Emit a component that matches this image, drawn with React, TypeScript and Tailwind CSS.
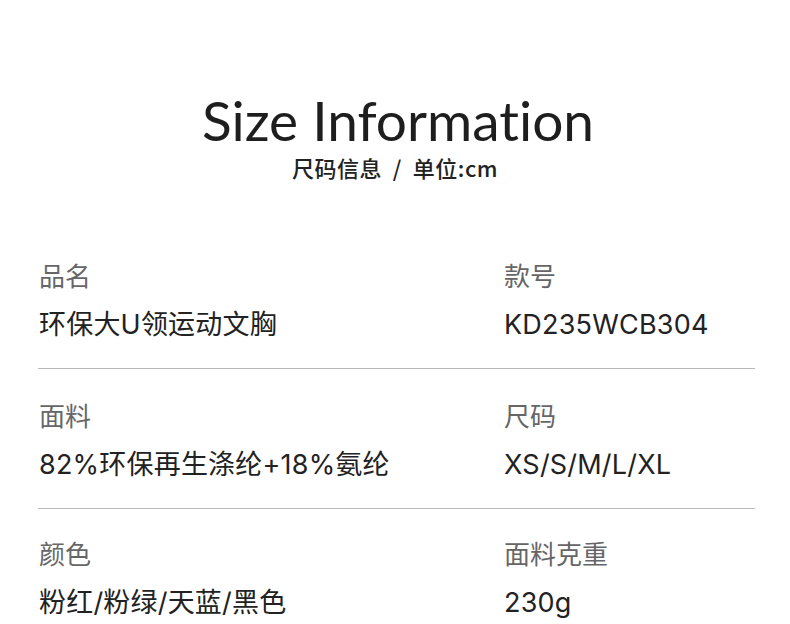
const rows = [
  [
    { label: "品名", value: "环保大U领运动文胸" },
    { label: "款号", value: "KD235WCB304" },
  ],
  [
    { label: "面料", value: "82%环保再生涤纶+18%氨纶" },
    { label: "尺码", value: "XS/S/M/L/XL" },
  ],
  [
    { label: "颜色", value: "粉红/粉绿/天蓝/黑色" },
    { label: "面料克重", value: "230g" },
  ],
];

export default function App() {
  return (
    <div className="w-[790px] h-[624px] bg-white overflow-hidden font-['Inter','Noto_Sans_CJK_SC',sans-serif]">
      <div className="pt-[90px] flex flex-col items-center">
        <h1 className="pl-[6px] text-[55px] leading-[60px] text-[#1e1e1e] font-['Lato',sans-serif] font-normal [font-variant-ligatures:none]">
          Size Information
        </h1>
        <p className="mt-[3px] text-[22px] leading-[28px] font-medium text-[#222] font-['Noto_Sans_CJK_SC',sans-serif] tracking-[0.5px]">
          尺码信息&nbsp;&nbsp;/&nbsp;&nbsp;单位:cm
        </p>
      </div>

      <div className="ml-[38px] w-[717px] mt-[48px]">
        {rows.map((row, i) => (
          <div
            key={i}
            className={`grid grid-cols-[465px_1fr] pl-[1px] pt-[30px] ${
              i < rows.length - 1 ? "pb-[25px] border-b border-[#b8b8b8]" : "pb-[20px] -mt-[2px]"
            }`}
          >
            {row.map((cell) => (
              <div key={cell.label} className="flex flex-col gap-[12px]">
                <span className="text-[26px] leading-[36px] text-[#666]">
                  {cell.label}
                </span>
                <span className="text-[27px] leading-[36px] text-[#222] tracking-[0.2px]">
                  {cell.value}
                </span>
              </div>
            ))}
          </div>
        ))}
      </div>
    </div>
  );
}
